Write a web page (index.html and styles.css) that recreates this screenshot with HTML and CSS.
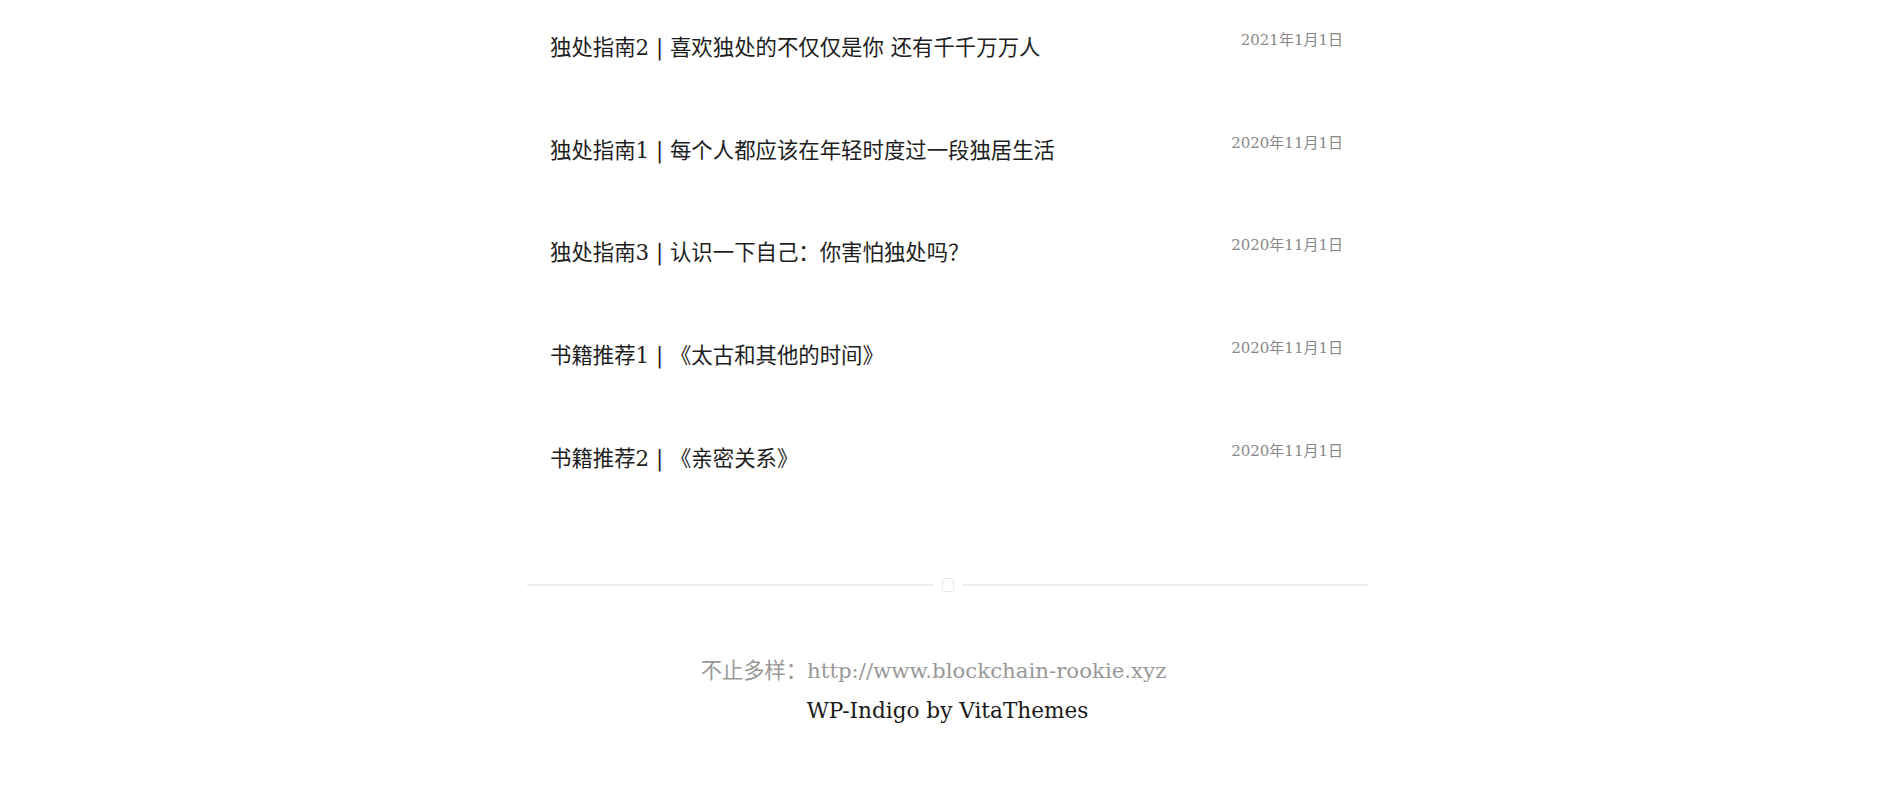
FILE: index.html
```html
<!DOCTYPE html>
<html lang="zh-CN">
<head>
<meta charset="utf-8">
<title>文章归档</title>
<link rel="stylesheet" href="styles.css">
</head>
<body>
<main class="wrap">
  <ul class="posts">
    <li class="post"><a class="title" href="#">独处指南2 | 喜欢独处的不仅仅是你 还有千千万万人</a><span class="date">2021年1月1日</span></li>
    <li class="post"><a class="title" href="#">独处指南1 | 每个人都应该在年轻时度过一段独居生活</a><span class="date">2020年11月1日</span></li>
    <li class="post"><a class="title" href="#">独处指南3 | 认识一下自己：你害怕独处吗？</a><span class="date">2020年11月1日</span></li>
    <li class="post"><a class="title" href="#">书籍推荐1 | 《太古和其他的时间》</a><span class="date">2020年11月1日</span></li>
    <li class="post"><a class="title" href="#">书籍推荐2 | 《亲密关系》</a><span class="date">2020年11月1日</span></li>
  </ul>
  <div class="divider"><span class="line"></span><span class="knot"></span><span class="line"></span></div>
  <footer class="footer">
    <p class="site">不止多样：http://www.blockchain-rookie.xyz</p>
    <p class="credit">WP-Indigo by VitaThemes</p>
  </footer>
</main>
</body>
</html>
```
FILE: styles.css
```css
html, body {
  margin: 0;
  padding: 0;
  background: #fff;
}
body {
  font-family: "DejaVu Serif", "Noto Sans CJK SC", serif;
  color: #222;
}
.wrap {
  width: 841px;
  margin: 0 auto;
  padding-top: 30px;
}
.posts {
  list-style: none;
  margin: 0;
  padding: 0;
}
.post {
  height: 102.7px;
  box-sizing: border-box;
  display: flex;
  justify-content: space-between;
  align-items: flex-start;
  padding: 0 25px 0 23px;
}
.title {
  margin-top: 3px;
  font-size: 21.4px;
  line-height: 30px;
  color: #1e1e1e;
  text-decoration: none;
}
.date {
  font-size: 15px;
  line-height: 20px;
  color: #888;
}
.divider {
  margin-top: 34.5px;
  display: flex;
  align-items: center;
  gap: 8px;
  height: 14px;
}
.line {
  flex: 1;
  height: 2px;
  background: #eeeeee;
}
.knot {
  width: 10px;
  height: 12px;
  border: 1px solid #e6e6e6;
  border-radius: 3px;
}
.footer {
  margin-top: 59px;
  text-align: center;
}
.footer p {
  margin: 0;
  line-height: 40px;
}
.site {
  font-size: 21.3px;
  color: #999;
  padding-right: 28px;
}
.credit {
  font-size: 21.6px;
  color: #1a1a1a;
}
```
